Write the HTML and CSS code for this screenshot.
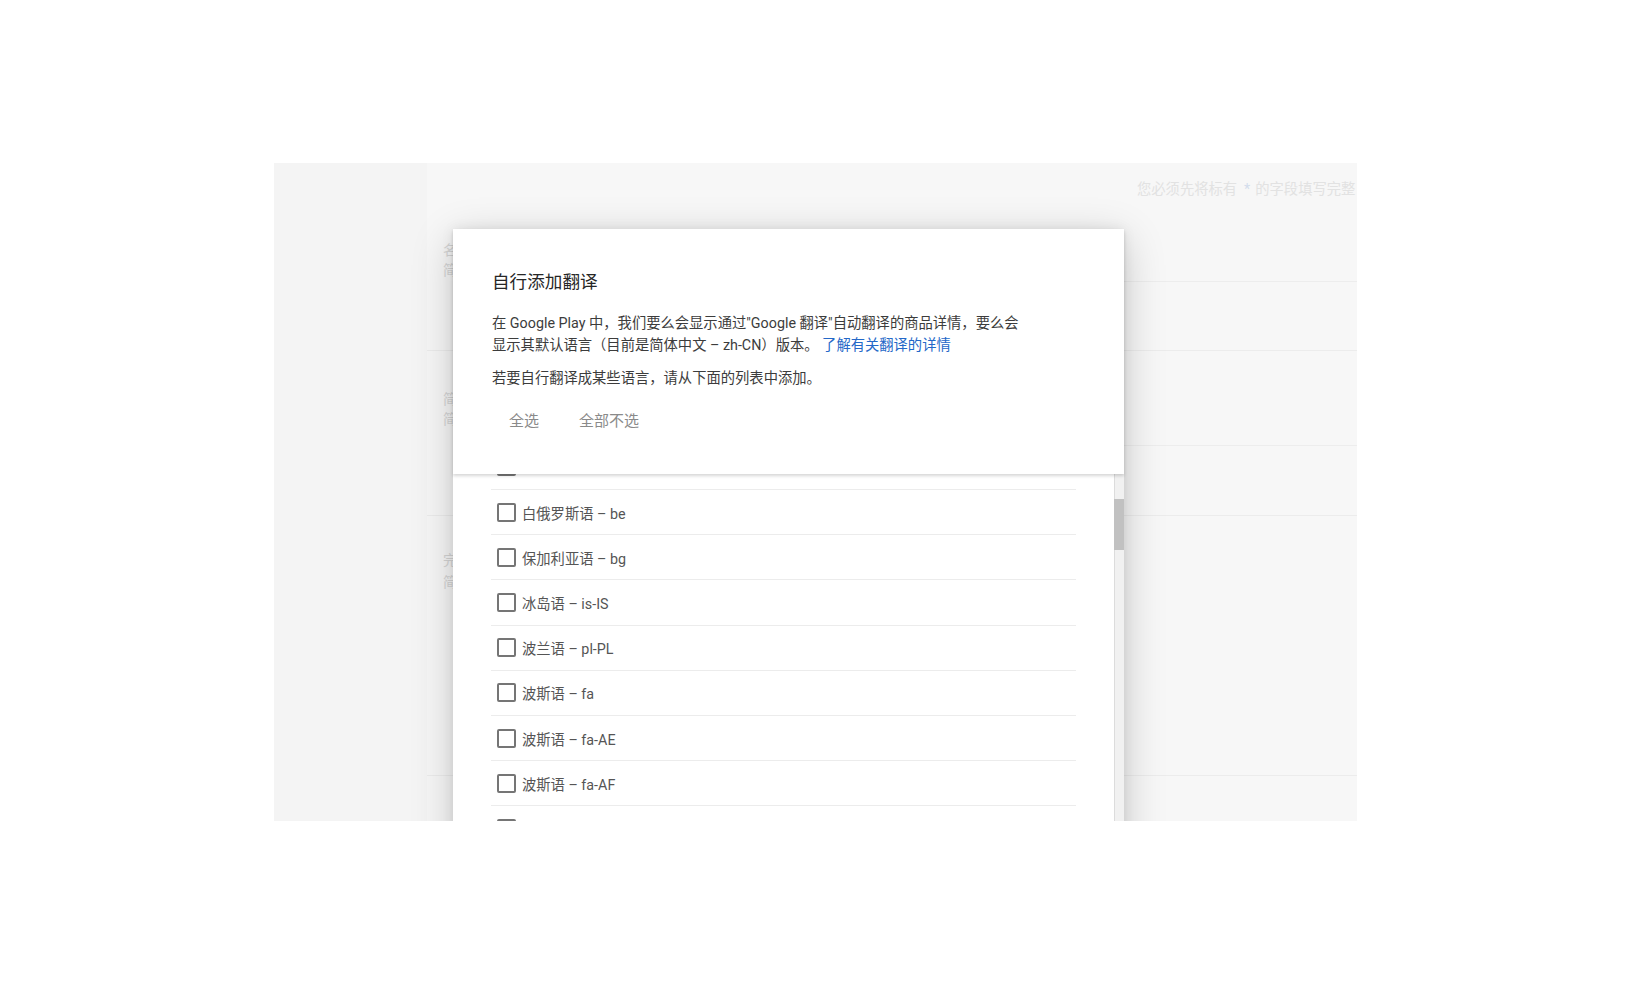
FILE: index.html
```html
<!DOCTYPE html>
<html lang="zh-CN">
<head>
    <title>自行添加翻译</title>
    <meta charset="utf-8">
    <link rel="stylesheet" href="styles.css">
</head>

<body>
    <div id="pagina">
        <aside class="lateral"></aside>

        <main class="conteudo">
            <div class="aviso">您必须先将标有<span class="obrig">*</span>的字段填写完整</div>

            <section class="campo c1">
                <div class="rotulo">名称 *<br>简体中文 – zh-CN</div>
                <div class="controle"></div>
            </section>
            <section class="campo c2">
                <div class="rotulo">简短说明 *<br>简体中文 – zh-CN</div>
                <div class="controle"></div>
            </section>
            <section class="campo c3">
                <div class="rotulo">完整说明 *<br>简体中文 – zh-CN</div>
            </section>
            <section class="campo c4"></section>
        </main>

        <div class="dialogo">
            <div class="cabecalho">
                <h2>自行添加翻译</h2>
                <p class="intro">在 Google Play 中，我们要么会显示通过"Google 翻译"自动翻译的商品详情，要么会<br>显示其默认语言（目前是简体中文 – zh-CN）版本。 <a href="#">了解有关翻译的详情</a></p>
                <p class="intro segundo">若要自行翻译成某些语言，请从下面的列表中添加。</p>
                <div class="acoes">
                    <button>全选</button>
                    <button>全部不选</button>
                </div>
            </div>

            <div class="corpo">
                <div class="lista">
                    <div class="rolagem">
                        <!-- primeiro item fica escondido sob o cabecalho -->
                        <div class="item"><span class="caixa"></span></div>
                        <div class="item"><span class="caixa"></span>白俄罗斯语 – be</div>
                        <div class="item"><span class="caixa"></span>保加利亚语 – bg</div>
                        <div class="item"><span class="caixa"></span>冰岛语 – is-IS</div>
                        <div class="item"><span class="caixa"></span>波兰语 – pl-PL</div>
                        <div class="item"><span class="caixa"></span>波斯语 – fa</div>
                        <div class="item"><span class="caixa"></span>波斯语 – fa-AE</div>
                        <div class="item"><span class="caixa"></span>波斯语 – fa-AF</div>
                        <div class="item"><span class="caixa"></span></div>
                    </div>
                </div>
                <div class="barra"><div class="polegar"></div></div>
            </div>
        </div>
    </div>
</body>
</html>
```

FILE: styles.css
```css
        body {
            margin: 0;
            background: #fff;
            font-family: Roboto, "Noto Sans CJK SC", sans-serif;
            font-size: 14px;
        }

        #pagina {
            position: relative;
            display: flex;
            width: 1083px;
            height: 658px;
            margin: 163px 0 0 274px;
            overflow: hidden;
        }

        .lateral {
            width: 153px;
            flex-shrink: 0;
            background: #f4f4f4;
        }

        .conteudo {
            flex: 1;
            background: #f7f7f7;
        }

        .aviso {
            height: 38px;
            box-sizing: border-box;
            padding: 16px 0 0 710px;
            font-size: 14.3px;
            line-height: 20px;
            white-space: nowrap;
            color: #e2e2e2;
        }

        .obrig {
            padding: 0 5px 0 7px;
            color: #d3ddec;
        }

        /* campos do formulario ao fundo, quase apagados */
        .campo {
            display: flex;
            border-bottom: 1px solid #ececec;
            box-sizing: border-box;
        }

        .rotulo {
            width: 200px;
            padding-left: 16px;
            line-height: 20px;
            color: #d6d6d6;
        }

        .controle {
            flex: 1;
            border-bottom: 1px solid #ededed;
        }

        .c1 { height: 150px; }
        .c1 .rotulo { padding-top: 39px; }
        .c1 .controle { height: 80px; }

        .c2 { height: 165px; }
        .c2 .rotulo { padding-top: 38px; }
        .c2 .controle { height: 94px; }

        .c3 { height: 260px; }
        .c3 .rotulo { padding-top: 33px; line-height: 22px; }

        .c4 { height: 80px; border: 0; }

        /* dialogo */
        .dialogo {
            position: absolute;
            left: 179px;
            top: 66px;
            width: 671px;
            height: 700px;
            display: flex;
            flex-direction: column;
            background: #fff;
            box-shadow: 0 10px 40px rgba(0, 0, 0, 0.2), 0 0 12px rgba(0, 0, 0, 0.08);
        }

        .cabecalho {
            position: relative;
            z-index: 1;
            padding: 40px 39px 36px;
            background: #fff;
            box-shadow: 0 2px 3px rgba(0, 0, 0, 0.16);
        }

        h2 {
            margin: 0;
            font-size: 17.6px;
            font-weight: 400;
            line-height: 26px;
            color: #262626;
        }

        .intro {
            margin: 16.5px 0 0;
            font-size: 14.3px;
            line-height: 22px;
            color: #3c3c3c;
        }

        .intro.segundo {
            margin-top: 11px;
        }

        .intro a {
            color: #2468c8;
            text-decoration: none;
        }

        .acoes {
            display: flex;
            gap: 6px;
            margin-top: 13px;
        }

        button {
            height: 36px;
            padding: 0 17px;
            border: 0;
            background: transparent;
            font-family: inherit;
            font-size: 15px;
            color: #8a8a8a;
        }

        .corpo {
            flex: 1;
            display: flex;
            overflow: hidden;
        }

        .lista {
            flex: 1;
            padding: 0 38px;
            overflow: hidden;
        }

        .rolagem {
            margin-top: -28.7px;
        }

        .item {
            display: flex;
            align-items: center;
            gap: 6px;
            height: 45.2px;
            box-sizing: border-box;
            padding-left: 6px;
            border-bottom: 1px solid #ececec;
            font-size: 14.3px;
            color: #555;
        }

        .caixa {
            width: 19px;
            height: 19px;
            box-sizing: border-box;
            border: 2px solid #757575;
            border-radius: 2px;
        }

        .barra {
            width: 10px;
            box-sizing: border-box;
            background: #f1f1f1;
            border-left: 1px solid #dcdcdc;
        }

        .polegar {
            height: 51px;
            margin: 25.5px 0 0 -1px;
            background: #c1c1c1;
        }
```
